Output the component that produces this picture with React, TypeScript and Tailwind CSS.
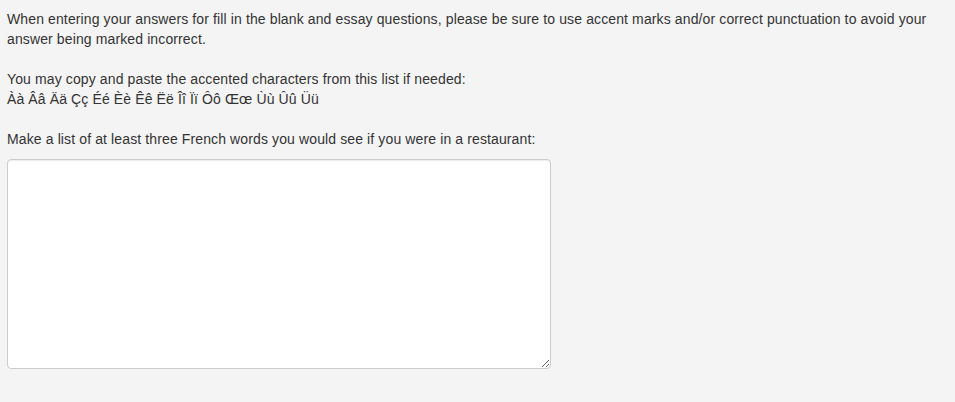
export default function App() {
  return (
    <div className="min-h-[402px] w-full bg-[#f4f4f4] px-[7px] pt-[9px] font-['Liberation_Sans',Arial,sans-serif] text-[14px] leading-[20px] tracking-[0.12px] text-[#333]">
      <p>
        When entering your answers for fill in the blank and essay questions, please be sure to use accent marks and/or correct punctuation to avoid your answer being marked incorrect.
      </p>
      <p className="mt-[20px]">You may copy and paste the accented characters from this list if needed:</p>
      <p>Àà Ââ Ää Çç Éé Èè Êê Ëë Îî Ïï Ôô Œœ Ùù Ûû Üü</p>
      <p className="mt-[20px]">Make a list of at least three French words you would see if you were in a restaurant:</p>
      <textarea className="mt-[10px] block h-[210px] w-[544px] rounded-[4px] border border-[#ccc] bg-white shadow-[inset_0_1px_1px_rgba(0,0,0,0.075)] outline-none" />
    </div>
  );
}
